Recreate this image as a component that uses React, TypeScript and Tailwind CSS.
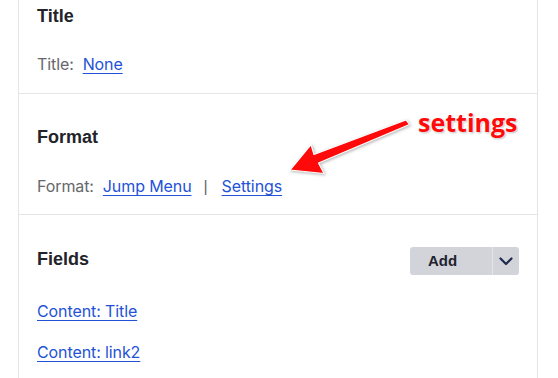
import React from "react";

const linkCls = "text-[#2352d6] underline underline-offset-[3px] decoration-1";
const bodyFont = "font-['Inter',sans-serif] text-[16px] tracking-[-0.1px]";

const Section = ({ children, className = "" }: { children: React.ReactNode; className?: string }) => (
    <div className={`border-b border-[#e5e5e8] pl-[18px] pr-[18px] ${className}`}>{children}</div>
);

const Heading = ({ children }: { children: React.ReactNode }) => (
    <h3 className="text-[18px] leading-6 font-bold text-[#232429]">{children}</h3>
);

const AddButton = () => (
    <div className="flex h-[28px] w-[109px] rounded-[3px] bg-[#d3d4d9] text-[#222330]">
        <button className="w-[82px] pl-[18px] text-left text-[15px] font-bold leading-[28px]">Add</button>
        <div className="w-px bg-[#e3e4e8]" />
        <button className="flex flex-1 items-center justify-center">
            <svg width="14" height="9" viewBox="0 0 14 9" fill="none">
                <path d="M1.5 1.5 L7 7 L12.5 1.5" stroke="#1b2a4e" strokeWidth="2.2" strokeLinecap="round" strokeLinejoin="round" />
            </svg>
        </button>
    </div>
);

export default function App() {
    return (
        <div className="relative h-[378px] w-[558px] overflow-hidden bg-white font-['Liberation_Sans',Arial,sans-serif] text-[16px]">
            <div className="ml-[18px] flex h-full w-[520px] flex-col border-x border-[#e5e5e8]">
                {/* Title */}
                <Section className="-mt-[27px] pt-[31px] pb-[17px]">
                    <Heading>Title</Heading>
                    <p className={`mt-[24px] leading-6 text-[#66676c] ${bodyFont}`}>
                        Title:<a href="#" className={`ml-[9px] ${linkCls}`}>None</a>
                    </p>
                </Section>

                {/* Format */}
                <Section className="pt-[31px] pb-[15px]">
                    <Heading>Format</Heading>
                    <p className={`mt-[25px] leading-6 text-[#66676c] ${bodyFont}`}>
                        Format:<a href="#" className={`ml-[9px] ${linkCls}`}>Jump Menu</a>
                        <span className="ml-[12px] mr-[14px] font-['Liberation_Sans',sans-serif] text-[#66676c]">|</span>
                        <a href="#" className={linkCls}>Settings</a>
                    </p>
                </Section>

                {/* Fields */}
                <div className="pl-[18px] pr-[18px] pt-[32px]">
                    <div className="flex items-start justify-between">
                        <Heading>Fields</Heading>
                        <AddButton />
                    </div>
                    <div className={`mt-[24px] flex flex-col gap-[17px] leading-6 ${bodyFont}`}>
                        <a href="#" className={`self-start ${linkCls}`}>Content: Title</a>
                        <a href="#" className={`self-start ${linkCls}`}>Content: link2</a>
                    </div>
                </div>
            </div>

            {/* annotation */}
            <svg className="absolute left-0 top-0 drop-shadow-[1px_1px_1.5px_rgba(0,0,0,0.3)]" width="558" height="378" viewBox="0 0 558 378">
                <path
                    d="M290 170 L311 144.5 L314 154.5 L406 120 L409.5 124.5 L318.5 163 L324 173.5 Z"
                    fill="#ff0a0a"
                    stroke="#ffffff"
                    strokeWidth="1.2"
                    strokeLinejoin="round"
                />
            </svg>
            <div className="absolute left-[418px] top-[107px] font-['Open_Sans',sans-serif] text-[25px] font-bold leading-[30px] text-[#ff0a0a] [text-shadow:0_0_2px_#fff,0_0_2px_#fff,1px_1px_2px_rgba(0,0,0,0.35)]">
                settings
            </div>
        </div>
    );
}
